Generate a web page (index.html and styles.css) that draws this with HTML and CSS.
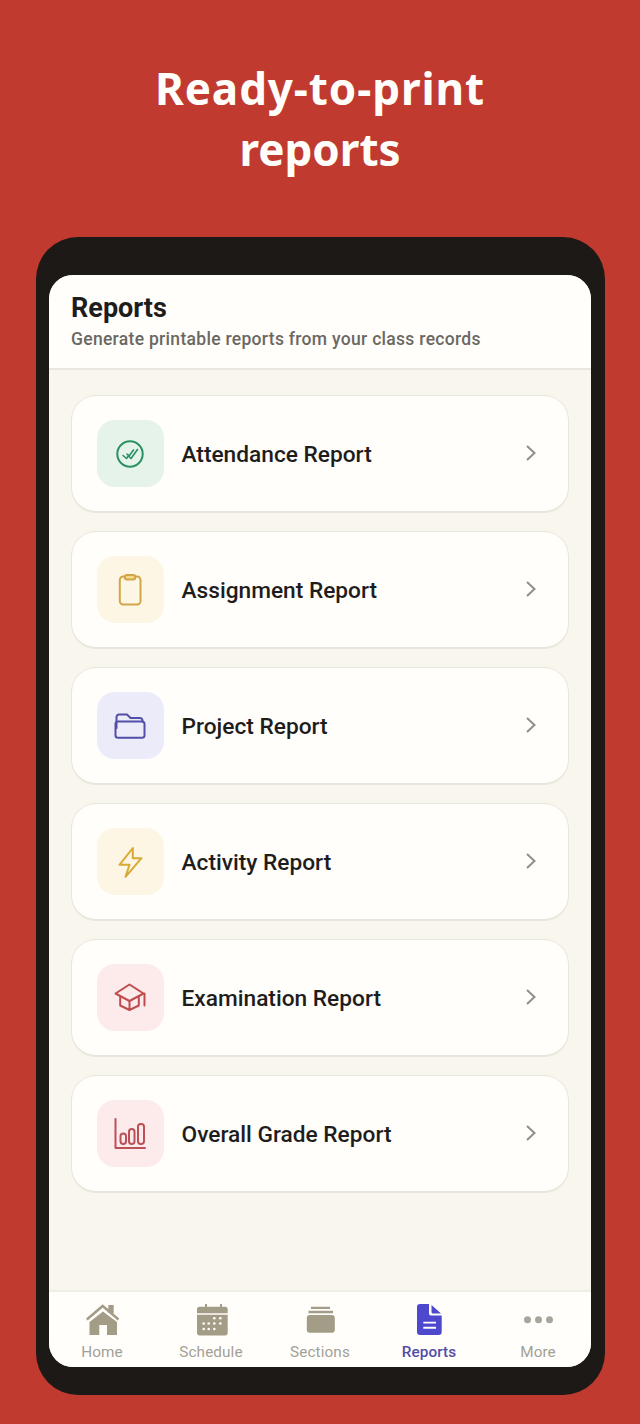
FILE: index.html
```html
<!DOCTYPE HTML>
<html lang="en-US">
<head>
	<meta http-equiv="Content-Type" content="text/html;charset=UTF-8">
	<title>Ready-to-print reports</title>
	<link rel="stylesheet" href="styles.css">
</head>
<body>
	<h1 class="headline"><span class="wide">Ready-to-print</span><br>reports</h1>
	<div class="phone">
		<div class="screen">
			<div class="top">
				<h2>Reports</h2>
				<p>Generate printable reports from your class records</p>
			</div>
			<div class="list">
				<div class="card">
					<span class="ico green">
						<svg viewBox="0 0 32 32"><circle cx="16" cy="16" r="12.700"/><path class="thin" d="M9 17.500l3.500 3 2.500-3.500M15 18.500l2 2 6.500-9M13 16l2 2 4.500-6"/></svg>
					</span>
					<span class="name">Attendance Report</span>
					<svg class="chev" viewBox="0 0 12 18"><path d="M2 2l7.500 7-7.500 7"/></svg>
				</div>
				<div class="card">
					<span class="ico amber">
						<svg viewBox="0 0 32 32"><rect x="5.800" y="2.500" width="20.700" height="28" rx="3.500"/><rect class="clip" x="10.800" y="1" width="10.500" height="4.500" rx="2.200"/></svg>
					</span>
					<span class="name">Assignment Report</span>
					<svg class="chev" viewBox="0 0 12 18"><path d="M2 2l7.500 7-7.500 7"/></svg>
				</div>
				<div class="card">
					<span class="ico indigo">
						<svg viewBox="0 0 32 32"><path d="M2.500 18V7a2.500 2.500 0 0 1 2.500-2.500h8L16.500 8H26a2.500 2.500 0 0 1 2.500 2.500v1"/><rect x="1.500" y="11.500" width="29" height="16.300" rx="2.500"/></svg>
					</span>
					<span class="name">Project Report</span>
					<svg class="chev" viewBox="0 0 12 18"><path d="M2 2l7.500 7-7.500 7"/></svg>
				</div>
				<div class="card">
					<span class="ico gold">
						<svg viewBox="0 0 32 32"><path d="M18.800 2L5.500 18.800h10l-4 12L27.500 12.200h-8.700z"/></svg>
					</span>
					<span class="name">Activity Report</span>
					<svg class="chev" viewBox="0 0 12 18"><path d="M2 2l7.500 7-7.500 7"/></svg>
				</div>
				<div class="card">
					<span class="ico red">
						<svg viewBox="0 0 32 32"><path d="M15.500 2.500L1.500 11.500 15.500 19l14-7.500z"/><path d="M6.200 15v8.500l9.300 4.500 9.300-4.500V15M15.500 19v9M30.500 11.500v12"/></svg>
					</span>
					<span class="name">Examination Report</span>
					<svg class="chev" viewBox="0 0 12 18"><path d="M2 2l7.500 7-7.500 7"/></svg>
				</div>
				<div class="card">
					<span class="ico rose">
						<svg viewBox="0 0 32 32"><path d="M1.500 1v29h29.500"/><rect x="6.500" y="15.500" width="5.500" height="10.500" rx="2.700"/><rect x="15" y="11" width="5.500" height="15" rx="2.700"/><rect x="24" y="6" width="6" height="20" rx="2.700"/></svg>
					</span>
					<span class="name">Overall Grade Report</span>
					<svg class="chev" viewBox="0 0 12 18"><path d="M2 2l7.500 7-7.500 7"/></svg>
				</div>
			</div>
			<div class="nav">
				<div class="tab">
					<svg viewBox="0 0 33 32"><path class="solid" d="M3.500 18L17 7.500 31 18v13H21V21h-7.700v10H3.500z"/><path class="solid" d="M22.300 1h5.400v8h-5.400z"/><path class="roof" d="M.8 15.500L16.700 2 32.500 15.500"/></svg>
					<span>Home</span>
				</div>
				<div class="tab">
					<svg viewBox="0 0 33 32"><path class="solid" d="M4.500 2.700H10V0h2v2.700h13V0h2v2.700h3.200a2.500 2.500 0 0 1 2.500 2.500v4H2v-4a2.500 2.500 0 0 1 2.500-2.500zM2 10.700h30.700v18a2.700 2.700 0 0 1-2.700 2.700H4.700A2.700 2.700 0 0 1 2 28.700z"/><g class="dots"><circle cx="19.300" cy="14.300" r="1.300"/><circle cx="25.300" cy="14.300" r="1.300"/><circle cx="8.700" cy="19.500" r="1.300"/><circle cx="13.700" cy="19.500" r="1.300"/><circle cx="19.300" cy="19.500" r="1.300"/><circle cx="25.300" cy="19.500" r="1.300"/><circle cx="8.700" cy="25" r="1.300"/><circle cx="13.700" cy="25" r="1.300"/><circle cx="19.300" cy="25" r="1.300"/></g></svg>
					<span>Schedule</span>
				</div>
				<div class="tab">
					<svg viewBox="0 0 33 32"><path class="solid" d="M7 2.700h19V5H7zM4.500 6.700H29v2.600H4.500zM5.800 11h22a3 3 0 0 1 3 3v11.700a3 3 0 0 1-3 3h-22a3 3 0 0 1-3-3V14a3 3 0 0 1 3-3z"/></svg>
					<span>Sections</span>
				</div>
				<div class="tab on">
					<svg viewBox="0 0 33 32"><path class="solid" d="M7 0h9v9.500a2 2 0 0 0 2 2h10.700V28a3 3 0 0 1-3 3H7a3 3 0 0 1-3-3V3a3 3 0 0 1 3-3zM18.500 1L28 9.500h-8a1.500 1.500 0 0 1-1.500-1.500z"/><path class="lines" d="M10.300 17.700H23v1.700H10.300zM10.300 22.800H23v1.900H10.300z"/></svg>
					<span>Reports</span>
				</div>
				<div class="tab">
					<svg viewBox="0 0 33 32"><g class="grey"><circle cx="5.500" cy="15.700" r="3.500"/><circle cx="16.500" cy="15.700" r="3.500"/><circle cx="27.500" cy="15.700" r="3.500"/></g></svg>
					<span>More</span>
				</div>
			</div>
		</div>
	</div>
</body>
</html>
```

FILE: styles.css
```css
body{
	margin: 0;
	width: 640px;
	height: 1424px;
	overflow: hidden;
	background-color: #c13a2f;
	font-family: Roboto, sans-serif;
}
.headline{
	margin: 0;
	padding-top: 58px;
	height: 237px;
	box-sizing: border-box;
	font-family: "Noto Sans", sans-serif;
	font-size: 44px;
	font-weight: 700;
	line-height: 61px;
	text-align: center;
	color: #fffefa;
}
.wide{
	letter-spacing: 0.9px;
}
.phone{
	margin-left: 36px;
	width: 569px;
	height: 1158px;
	box-sizing: border-box;
	padding: 38px 14px 28px 13px;
	background-color: #1c1917;
	border-radius: 42px;
}
.screen{
	display: flex;
	flex-direction: column;
	height: 100%;
	overflow: hidden;
	background-color: #f9f6ee;
	border-radius: 24px;
}
.top{
	height: 95px;
	box-sizing: border-box;
	padding: 17px 22px 0;
	background-color: #fffefb;
	border-bottom: 2px solid #ebe7df;
}
.top h2{
	margin: 0;
	font-size: 27px;
	font-weight: 700;
	line-height: 32px;
	color: #1f1d1b;
}
.top p{
	margin: 4px 0 0;
	font-size: 17.500px;
	font-weight: 500;
	letter-spacing: 0.3px;
	line-height: 22px;
	color: #6b6862;
}
.list{
	flex: 1;
	display: flex;
	flex-direction: column;
	gap: 18px;
	padding: 25px 22px 0;
}
.card{
	display: flex;
	align-items: center;
	height: 118px;
	box-sizing: border-box;
	padding: 0 31px 0 24.500px;
	background-color: #fffefb;
	border: 1.500px solid #e9e5dc;
	border-bottom-width: 2.500px;
	border-radius: 25px;
}
.ico{
	display: flex;
	align-items: center;
	justify-content: center;
	width: 67px;
	height: 67px;
	margin-right: 18px;
	border-radius: 18px;
}
.ico svg{
	width: 32px;
	height: 32px;
	fill: none;
	stroke: currentColor;
	stroke-width: 2;
	stroke-linecap: round;
	stroke-linejoin: round;
}
.ico .thin{stroke-width: 1.600;}
.green{background-color: #e5f3ea; color: #2a9160;}
.amber{background-color: #fdf6e4; color: #d3a549;}
.indigo{background-color: #ebebfa; color: #534fa8;}
.gold{background-color: #fdf6e4; color: #d9a936;}
.red{background-color: #fcebea; color: #bf4d50;}
.rose{background-color: #fcebea; color: #bb5157;}
.amber .clip{fill: #f6d78e;}
.name{
	flex: 1;
	padding-top: 2px;
	font-size: 22.700px;
	font-weight: 500;
	color: #1f1d1b;
}
.chev{
	width: 12px;
	height: 18px;
	margin-top: -1px;
	fill: none;
	stroke: #928f89;
	stroke-width: 2;
}
.nav{
	display: flex;
	justify-content: center;
	height: 77px;
	box-sizing: border-box;
	background-color: #fffefb;
	border-top: 2px solid #f0ede6;
}
.tab{
	flex: 0 0 109px;
	display: flex;
	flex-direction: column;
	align-items: center;
	padding-top: 12px;
	font-size: 15.300px;
	color: #a3a097;
}
.tab svg{
	width: 33px;
	height: 32px;
}
.tab span{
	margin-top: 7px;
	line-height: 18px;
	letter-spacing: 0.1px;
}
.tab .solid{fill: #a39c87;}
.tab .grey{fill: #a8a59c;}
.tab .roof{fill: none; stroke: #a39c87; stroke-width: 2.500;}
.tab .dots{fill: #fffefb;}
.tab.on{color: #514da6; font-weight: 500;}
.tab.on .solid{fill: #4e48cf;}
.tab.on .lines{fill: #fffefb;}
```
